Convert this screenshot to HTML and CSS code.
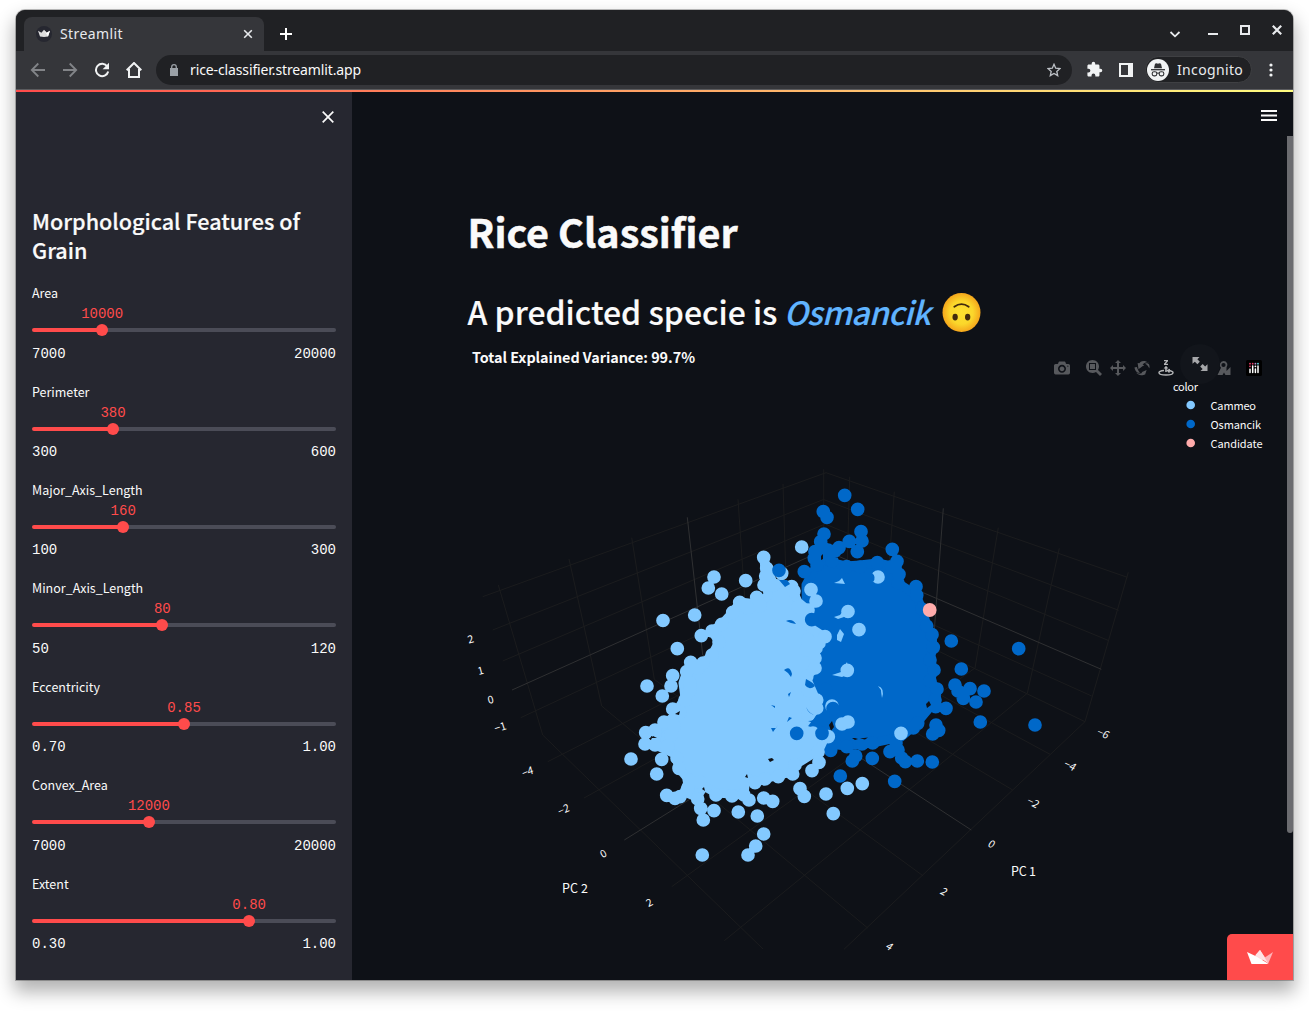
FILE: index.html
```html
<!DOCTYPE html>
<html lang="en">
<head>
<meta charset="utf-8">
<title>Streamlit</title>
<link rel="stylesheet" href="styles.css">
</head>
<body>
<div class="window">
  <div class="tabstrip">
    <div class="tab">
      <svg class="favicon" viewBox="0 0 16 16"><circle cx="8" cy="8" r="8" fill="#262730"/><path d="M2 4.8l3.4 2L8 3.8l2.6 3 3.4-2-2 5.8q-4 .8-8 0z" fill="#ddd"/><path d="M8 3.8l2.6 3 3.4-2-2 5.8z" fill="#fff"/></svg>
      <span class="tab-title">Streamlit</span>
      <svg class="tab-close" viewBox="0 0 10 10"><path d="M1.2 1.2l7.6 7.6M8.8 1.2L1.2 8.8" stroke="#e8eaed" stroke-width="1.6"/></svg>
    </div>
    <svg class="new-tab" viewBox="0 0 12 12"><path d="M6 0v12M0 6h12" stroke="#fff" stroke-width="2"/></svg>
    <div class="window-buttons">
      <svg width="12" height="12" viewBox="0 0 12 12"><path d="M1.5 4L6 8.3 10.500 4" fill="none" stroke="#e8eaed" stroke-width="1.8"/></svg>
      <svg width="10" height="12" viewBox="0 0 10 12"><path d="M0 10h10" stroke="#e8eaed" stroke-width="2"/></svg>
      <svg width="10" height="12" viewBox="0 0 10 12"><path d="M1 2h8v8H1z" fill="none" stroke="#e8eaed" stroke-width="2"/></svg>
      <svg width="10" height="12" viewBox="0 0 10 12"><path d="M.8 1.800l8.400 8.400M9.200 1.800L.8 10.200" stroke="#e8eaed" stroke-width="2.200"/></svg>
    </div>
  </div>
  <div class="toolbar">
    <svg class="nav" viewBox="0 0 16 16"><path d="M15 8H2M8.300 1.500L1.800 8l6.500 6.500" fill="none" stroke="#828488" stroke-width="1.800"/></svg>
    <svg class="nav" viewBox="0 0 16 16"><path d="M1 8h13M7.700 1.500L14.200 8l-6.500 6.500" fill="none" stroke="#828488" stroke-width="1.800"/></svg>
    <svg class="nav" viewBox="0 0 16 16"><path d="M13.300 4.500A6.200 6.200 0 1 0 14.200 9.500" fill="none" stroke="#f1f3f4" stroke-width="2"/><path d="M15 .8v6.400H8.600z" fill="#f1f3f4"/></svg>
    <svg class="nav" viewBox="0 0 16 16"><path d="M3 7v8h10V7M.7 8.300L8 1l7.300 7.300" fill="none" stroke="#f1f3f4" stroke-width="2"/></svg>
    <div class="address">
      <svg width="8" height="12" viewBox="0 0 8 12"><path d="M0 4h8v8H0z" fill="#9aa0a6"/><path d="M1.700 4.500V3a2.300 2.300 0 0 1 4.600 0v1.500" fill="none" stroke="#9aa0a6" stroke-width="1.300"/></svg>
      <span class="url">rice-classifier.streamlit.app</span>
      <svg class="star" viewBox="0 0 14 14"><path d="M7 1.300l1.700 3.900 4.300.4-3.200 2.800.9 4.200L7 10.400l-3.700 2.200.9-4.200L1 5.600l4.300-.4z" fill="none" stroke="#bdc1c6" stroke-width="1.300"/></svg>
    </div>
    <svg class="puzzle" viewBox="0 0 24 24"><path fill="#f1f3f4" d="M20.500 11H19V7c0-1.100-.9-2-2-2h-4V3.500a2.500 2.500 0 0 0-5 0V5H4c-1.100 0-2 .9-2 2v3.800h1.500a2.700 2.700 0 0 1 0 5.400H2V20c0 1.100.9 2 2 2h3.800v-1.500a2.700 2.700 0 0 1 5.400 0V22H17c1.100 0 2-.9 2-2v-4h1.500a2.500 2.500 0 0 0 0-5z"/></svg>
    <svg class="panel-icon" viewBox="0 0 14 14"><path d="M0 0h14v14H0zM2 2v10h7V2z" fill="#f1f3f4" fill-rule="evenodd"/></svg>
    <div class="incognito">
      <svg width="22" height="22" viewBox="0 0 22 22"><circle cx="11" cy="11" r="11" fill="#f1f3f4"/><path d="M7 9.300l1-4.500 1.600-.5q1.400.7 2.800 0l1.600.5 1 4.500z" fill="#303134"/><path d="M4 10.700h14" stroke="#303134" stroke-width="1.300"/><g fill="none" stroke="#303134" stroke-width="1.100"><rect x="5.200" y="12.700" width="4.600" height="4.200" rx="1.800"/><rect x="12.200" y="12.700" width="4.600" height="4.200" rx="1.800"/><path d="M9.800 14.300q1.200-.7 2.400 0"/></g></svg>
      <span>Incognito</span>
    </div>
    <svg class="dots" viewBox="0 0 4 14"><circle cx="2" cy="2" r="1.600"/><circle cx="2" cy="7" r="1.600"/><circle cx="2" cy="12" r="1.600"/></svg>
  </div>
  <div class="rainbow"></div>
  <div class="page">
    <aside class="sidebar">
      <svg class="sidebar-close" viewBox="0 0 12 12"><path d="M.7.7l10.600 10.600M11.300.7L.7 11.300" stroke="#fafafa" stroke-width="1.700"/></svg>
      <h2 class="sidebar-title">Morphological Features of Grain</h2>
      <div class="slider" style="--p:23.080%"><label>Area</label><div class="value"><span>10000</span></div><div class="track"><i></i></div><div class="range"><span>7000</span><span>20000</span></div></div>
      <div class="slider" style="--p:26.670%"><label>Perimeter</label><div class="value"><span>380</span></div><div class="track"><i></i></div><div class="range"><span>300</span><span>600</span></div></div>
      <div class="slider" style="--p:30%"><label>Major_Axis_Length</label><div class="value"><span>160</span></div><div class="track"><i></i></div><div class="range"><span>100</span><span>300</span></div></div>
      <div class="slider" style="--p:42.860%"><label>Minor_Axis_Length</label><div class="value"><span>80</span></div><div class="track"><i></i></div><div class="range"><span>50</span><span>120</span></div></div>
      <div class="slider" style="--p:50%"><label>Eccentricity</label><div class="value"><span>0.85</span></div><div class="track"><i></i></div><div class="range"><span>0.70</span><span>1.00</span></div></div>
      <div class="slider" style="--p:38.460%"><label>Convex_Area</label><div class="value"><span>12000</span></div><div class="track"><i></i></div><div class="range"><span>7000</span><span>20000</span></div></div>
      <div class="slider" style="--p:71.430%"><label>Extent</label><div class="value"><span>0.80</span></div><div class="track"><i></i></div><div class="range"><span>0.30</span><span>1.00</span></div></div>
    </aside>
    <main class="main">
      <svg class="menu" viewBox="0 0 16 12"><path d="M0 1h16M0 5.500h16M0 10h16" stroke="#fafafa" stroke-width="1.900"/></svg>
      <h1>Rice Classifier</h1>
      <h2 class="prediction"><span>A predicted specie is <em>Osmancik</em></span>
        <svg class="emoji" viewBox="0 0 38 38"><defs><radialGradient id="face"><stop offset="0" stop-color="#fde030"/><stop offset=".6" stop-color="#fbd72b"/><stop offset="1" stop-color="#f5a61c"/></radialGradient></defs><ellipse cx="19" cy="19" rx="18.500" ry="19" fill="url(#face)"/><path d="M12 13.300q7-5 14 0" fill="none" stroke="#422b0d" stroke-width="1.800" stroke-linecap="round"/><ellipse cx="12.800" cy="23.500" rx="2.600" ry="3.300" fill="#422b0d"/><ellipse cx="25" cy="23.500" rx="2.600" ry="3.300" fill="#422b0d"/></svg>
      </h2>
      <div class="figure">
        <svg class="plot" viewBox="468 340 800 625">
          <text class="plot-title" x="472" y="363" textLength="223">Total Explained Variance: 99.7%</text>
          <g class="grid">
            <path d="M482.700 596.700L826 472.700L1127.300 577.300M492.700 630L823.500 499.500L1118.700 610.300M502.700 661L825 524L1109 640.700M520.700 717.700L825 576L1091.700 696"/>
            <path d="M498.300 585L542.700 735M569 559L601.700 706M631.700 537.700L654.300 679.300M738 499.300L747 632M783 484L787 612M823.700 469.300V600M849.700 476.700L846 607M894.300 491.700L885 625M998.300 527.700L975 668M1059.300 548.300L1027.300 693.300M1128.300 572.300L1085 721.700"/>
            <path d="M542.700 735L763 949M601.700 706L867.700 928M654.300 679.300L923.300 876M747 632L1012.700 790M787 612L1050 754.300M824 596L1085 721.700M1085 721.700L844 949.300M1027.300 693.300L724.300 940.700M975 668L671.700 886.700M891 628L584 798M850 608L547.700 761.700"/>
            <path class="zero" d="M512 690L824 550L1101.300 669.300M687.300 517.300L702.700 655L971.300 830M943.300 508.300L933 648L624.300 840"/>
          </g>
          <g class="osmancik">
            <path class="mass" d="M820 542L817 565L806 585L808 742L847 746L872 743L901 737L917 723L936 700L937 689L930 681L934 670L930 660L933 647L932 635L927 626L922 609L916 595L898 583L897 561L892 566L877 563L860 565L846 566L828 562L828 550z"/>
            <path class="marks" d="M844.700 495.300h0M857.700 509.300h0M823.300 511.700h0M827 517.300h0M824 534h0M820.700 541.700h0M815 551.700h0M814.300 558.300h0M817 565h0M828 550h0M839 547.700h0M849.300 541.300h0M861 531.700h0M862 541h0M857.300 551.700h0M832 561h0M835 551h0M846.700 566.700h0M860 567h0M877.300 562.700h0M892.300 549.300h0M897 561.300h0M891.700 566.700h0M899 574.300h0M898 583h0M916 586.700h0M916.700 595.300h0M922 609h0M926.700 626h0M932 634.700h0M933.300 647.300h0M930 660h0M934 670h0M930 681h0M937 689h0M935 700h0M804.300 571.700h0M951.300 641h0M1018.700 648.700h0M961.300 669h0M955 685h0M958 691h0M970 688.700h0M963.300 698.300h0M984 691h0M976 702h0M946 708.300h0M935.700 706.700h0M980.300 722h0M1035 725h0M917.700 723.300h0M913.300 728h0M936 725h0M938.700 730.300h0M932.700 734h0M894.700 781.300h0M932.300 762h0M917.300 761h0M905.300 761.700h0M901.700 758h0M890 751.700h0M898 750h0M896 743h0M872.300 758.300h0M852.300 761h0M855.700 756h0M872.700 743h0M862 744h0M846.700 746.700h0M830.700 750.300h0M840.300 776h0"/>
            <path class="gap" d="M821 556l2-2v5l-2 1zM926 704l3-3 2 4-4 3zM852 738l3 0 3 1-3 1zM860 738.500l8-1-3 2zM829 725l3-4 2 6-3 4z"/>
          </g>
          <g class="cammeo">
            <path class="mass" d="M764 560L773 583L791 586L798 602L809 611L806 625L823 636L814 649L815 668L806 677L816 700L816 708L801 728L813 733L825 737L818 752L811 755L795 765L792 772L778 775L765 779L755 782L746 776L744 795L732 794L716 793L704 786L697 797L684 792L689 780L679 768L675 754L655 745L658 730L672 718L678 709L685 698L683 683L687 671L703 663L712 655L719 642L712 631L722 624L733 612L740 602L757 604L768 596z"/>
            <path class="marks" d="M763.700 557.300h0M766.700 568.300h0M765.700 576h0M764 585h0M773 585h0M781.700 573.300h0M756.700 597.300h0M739.700 602.300h0M732.700 612.300h0M721.700 624.300h0M712 631h0M701.300 635.700h0M719 642h0M712 655h0M703 663h0M690.700 662.300h0M686.700 671.700h0M672.700 675.700h0M671 686h0M662.300 696h0M685 700h0M672.700 709h0M664 722h0M655 730h0M645.700 732.700h0M645 744h0M655 745h0M661.700 759.300h0M656.700 774h0M679 768.300h0M677 758h0M689.300 780h0M688 788h0M666.700 795.300h0M675 798.300h0M680 796.700h0M697.700 799h0M700.700 808.300h0M703.300 820h0M714 810.700h0M716 795h0M732 796h0M738.300 812h0M744 795h0M749 800h0M757.300 816h0M763.700 798h0M772.700 801.300h0M755 782.700h0M765 779h0M778.300 776.700h0M792.700 774h0M795 765h0M812 770.700h0M819 762.300h0M818 752h0M828.300 736.700h0M800 788.700h0M804.300 796.300h0M826 794h0M825 636.700h0M819 643h0M816 648h0M815 668h0M806.700 676.700h0M816.700 700h0M816.700 708h0M832 706h0M801.700 728h0M813 733h0M791.700 586.700h0M794 591h0M811 589.700h0M816 601h0M808 610h0M798 607h0M801.700 547h0M714 577h0M708.300 588h0M721.700 594h0M745.700 580.700h0M694.700 615h0M663 620.500h0M677.300 648.700h0M647 686h0M631 759h0M702.300 855h0M763.700 834h0M755.700 846h0M748 855h0M878 577h0M848 611.500h0M859 629.700h0M847.300 670.300h0M842 724h0M848 722h0M901 733.300h0M862.300 783.700h0M847.300 788.300h0M833.300 813.700h0M815 658h0M808 690h0M808 640h0M806 650h0M690 690h0M680 712h0M671 735h0M668 746h0M674 726h0M700 782h0M808 715h0M748 608h0M760 606h0M698 668h0M690 683h0"/>
            <path d="M834 583l5-2 3-3 3 6zM834 617l6-2 3-4 1 6-6 2zM837 635l3-6 4 5-3 8-4-2zM832 675l9-3 6-10 2 12-7 3z"/>
            <path class="gap" d="M768 759l4-1 2 2-4 2zM651 738l2-2 4 2zM745 777l2-3 1 4zM675 714l5-3-1 4zM702 789l2-2 1 4z"/>
          </g>
          <g class="osmancik">
            <path class="marks" d="M779 570.300h0M811.700 619.700h0M796.700 733.300h0M822 733.300h0M825.500 689.500h0M833 708.500h0"/>
            <path d="M779 580l8 0 3 4-5 3zM786 621q6-3 10 3l-5-1zM784 670q6-5 8 4l-1 3-3-4zM771 705l4 1 0 2zM771 728l5 0 2-3-5 7zM806 679q8 4 9 7-6 5-10-1zM806 707q4 8 10 8-7 0-10-8zM788 694l3-2-2 5zM808 721q6 0 10-4l12-6-2 17-12-4zM792 718l-5 4 2-5zM871 572q6 5 2 10l-3-3z"/>
          </g>
          <path d="M878 686q7 2 4 12-1-6-1-8z" fill="#83c9ff"/>
          <circle class="candidate" cx="929.700" cy="610" r="6.900"/>
          <g class="ticks">
            <text transform="translate(470.500 638.500) rotate(-15)">2</text>
            <text transform="translate(480.500 670) rotate(-15)">1</text>
            <text transform="translate(490.500 699) rotate(-15)">0</text>
            <text transform="translate(500 726.500) rotate(-18)">−1</text>
            <text transform="translate(527.500 771) rotate(-22) skewX(-8)">−4</text>
            <text transform="translate(563.500 809) rotate(-25) skewX(-8)">−2</text>
            <text transform="translate(603 853) rotate(-28)">0</text>
            <text transform="translate(649 902) rotate(-28)">2</text>
            <text transform="translate(1103.500 733) rotate(23) skewX(-8)">−6</text>
            <text transform="translate(1070.500 765) rotate(25) skewX(-8)">−4</text>
            <text transform="translate(1033.500 802) rotate(27) skewX(-8)">−2</text>
            <text transform="translate(992 843.500) rotate(25) skewX(-8)">0</text>
            <text transform="translate(944.500 891) rotate(28) skewX(-8)">2</text>
            <text transform="translate(890 946) rotate(30) skewX(-8)">4</text>
          </g>
          <g class="axis-title"><text x="562" y="893" textLength="26">PC 2</text><text x="1011" y="876" textLength="25">PC 1</text></g>
          <g class="legend">
            <text x="1173" y="391" textLength="25">color</text>
            <circle cx="1190.700" cy="405" r="4.300" fill="#83c9ff"/><text x="1210.500" y="410" textLength="45.500">Cammeo</text>
            <circle cx="1190.700" cy="424" r="4.300" fill="#0068c9"/><text x="1210.500" y="429" textLength="50.500">Osmancik</text>
            <circle cx="1190.700" cy="443" r="4.300" fill="#ffabab"/><text x="1210.500" y="448" textLength="52">Candidate</text>
          </g>
        </svg>
        <div class="modebar">
          <svg class="tool camera" viewBox="0 0 1000 1000"><path transform="matrix(1 0 0 -1 0 850)" d="m500 450c-83 0-150-67-150-150 0-83 67-150 150-150 83 0 150 67 150 150 0 83-67 150-150 150z m400 150h-120c-16 0-34 13-39 29l-31 93c-6 15-23 28-40 28h-340c-16 0-34-13-39-28l-31-94c-6-15-23-28-40-28h-120c-55 0-100-45-100-100v-450c0-55 45-100 100-100h800c55 0 100 45 100 100v450c0 55-45 100-100 100z m-400-550c-138 0-250 112-250 250 0 138 112 250 250 250 138 0 250-112 250-250 0-138-112-250-250-250z m365 380c-19 0-35 16-35 35 0 19 16 35 35 35 19 0 35-16 35-35 0-19-16-35-35-35z"/></svg>
          <svg class="tool" viewBox="0 0 1000 1000"><path transform="matrix(1 0 0 -1 0 850)" d="m1000-25l-250 251c40 63 63 138 63 218 0 224-182 406-407 406-224 0-406-182-406-406s183-406 407-406c80 0 155 22 218 62l250-250 125 125z m-812 250l0 438 437 0 0-438-437 0z m62 375l313 0 0-312-313 0 0 312z"/></svg>
          <svg class="tool" viewBox="0 0 1000 1000"><path transform="matrix(1 0 0 -1 0 850)" d="m1000 350l-187 188 0-125-250 0 0 250 125 0-188 187-187-187 125 0 0-250-250 0 0 125-188-188 186-187 0 125 252 0 0-250-125 0 187-188 188 188-125 0 0 250 250 0 0-126 187 188z"/></svg>
          <svg class="tool" viewBox="0 0 1000 1000"><path transform="matrix(1 0 0 -1 0 850)" d="m922 660c-5 4-9 7-14 11-359 263-580-31-580-31l-102 28 58-400c0 1 1 1 2 2 118 108 351 249 351 249s-62 27-100 42c88 83 222 183 347 122 16-8 30-17 44-27-2 1-4 2-6 4z m36-329c0 0 64 229-88 296-62 27-124 14-175-11 157-78 225-208 249-266 8-19 11-31 11-31 2 5 6 15 11 32-5-13-8-20-8-20z m-775-239c70-31 117-50 198-32-121 80-199 346-199 346l-96-15-58-12c0 0 55-226 155-287z m603 133l-317-139c0 0 4-4 19-14 7-5 24-15 24-15s-177-147-389 4c235-287 536-112 536-112l31-22 100 299-4-1z m-298-153c6-4 14-9 24-15 0 0-17 10-24 15z"/></svg>
          <svg class="tool active" viewBox="0 0 16 16"><path d="M6 0h4v1.200L7.800 3.700H10V5H6V3.800L8.200 1.300H6zM8 5.800l2.400 2.700H8.800V12H7.200V8.500H5.600z"/><path d="M6 10.500C-1 11-1 15 8 15s9-4 2-4.500M12 9.500l-2.500 1 2 2" fill="none" stroke="#b5b6b8" stroke-width="1.400"/></svg>
          <svg class="tool home" viewBox="0 0 16 16"><path d="M7.500 1A4 4 0 0 1 10.500 7.600V11L14.500 7V15H9.500L8 12.500 6.500 15H1.500L5 7.800A4 4 0 0 1 7.500 1zm0 1.900a2.100 2.100 0 1 0 0 4.200 2.100 2.100 0 0 0 0-4.200z" fill-rule="evenodd"/></svg>
          <svg class="tool logo" viewBox="0 0 16 16"><rect width="16" height="16" rx="1.500" fill="#000"/><path d="M4 9.300v3.200M6.700 6V12.500M9.400 9v3.500M12 6V12.500" stroke="#fff" stroke-width="1.500" stroke-linecap="round"/><g fill="#ef3f6b"><circle cx="4" cy="3.700" r=".9"/><circle cx="4" cy="6.300" r=".9"/><circle cx="6.700" cy="3.700" r=".9"/></g><circle cx="9.400" cy="3.700" r=".9" fill="#b58ccb"/><circle cx="9.400" cy="6.300" r=".9" fill="#fff"/><circle cx="12" cy="3.700" r=".9" fill="#5fd9e0"/></svg>
        </div>
        <div class="fullscreen"><svg viewBox="0 0 16 16"><path d="M0 0h7.500L5.200 2.300 7.800 5 5.200 7.600 2.500 5 0 7.300zM16 15H8.500l2.300-2.300L8.200 10l2.600-2.600 2.700 2.700L16 7.700z"/></svg></div>
      </div>
      <div class="scrollbar"></div>
      <div class="badge"><svg viewBox="0 0 26 14"><path d="M13 0l5 7.500L13 12 8 6z" fill="#ffdede"/><path d="M26 2l-5 12-4-6z" fill="#ffb3b8"/><path d="M8.500 5L13 0l8 13z" fill="#ffe3e6"/><path d="M0 2l8.500 4L21 13.500 20 14H4.500z" fill="#fff"/></svg></div>
    </main>
  </div>
</div>
</body>
</html>
```
FILE: styles.css
```css
* { box-sizing: border-box; }
body {
  margin: 0;
  padding: 10px 16px 0;
  height: 1012px;
  overflow: hidden;
  background: #fff;
  color: #fafafa;
  font-family: "Noto Sans CJK SC", "Noto Sans", sans-serif;
}
svg { display: block; flex: none; }
.window {
  width: 1277px;
  height: 970px;
  border-radius: 9px 9px 0 0;
  background: #35363a;
  box-shadow: 0 0 0 1px rgba(0,0,0,.25), 0 10px 18px 2px rgba(0,0,0,.3);
}
.tabstrip {
  height: 41px;
  display: flex;
  align-items: flex-start;
  padding: 7px 11px 0 8px;
  background: #202124;
  border-radius: 9px 9px 0 0;
  font: 14.5px "Noto Sans", sans-serif;
}
.tab {
  width: 240px;
  height: 34px;
  display: flex;
  align-items: center;
  padding: 0 11px 0 12px;
  background: #35363a;
  border-radius: 8px 8px 0 0;
  color: #e8eaed;
}
.favicon { width: 16px; height: 16px; }
.tab-title { margin-left: 8px; flex: 1; padding-bottom: 2px; font-size: 14px; letter-spacing: .4px; }
.tab-close { width: 10px; height: 10px; }
.new-tab { width: 12px; height: 12px; margin: 11px 0 0 16px; }
.window-buttons { margin-left: auto; display: flex; gap: 22px; padding-top: 7px; }
.window-buttons svg:first-child { margin: 4px 5px 0 0; }
.toolbar {
  height: 39px;
  display: flex;
  align-items: center;
  padding: 0 20px 1px 14px;
  border-bottom: 1px solid #5b5c5f;
  font-family: "Noto Sans", sans-serif;
}
.nav { width: 16px; height: 16px; margin-right: 16px; }
.address {
  width: 916px;
  height: 30px;
  margin-left: -2px;
  display: flex;
  align-items: center;
  padding: 0 11px 0 14px;
  border-radius: 15px;
  background: #202124;
}
.url { flex: 1; margin-left: 12px; font-size: 14px; letter-spacing: -.12px; }
.star { width: 14px; height: 14px; }
.puzzle { width: 17px; height: 17px; margin-left: 14px; }
.panel-icon { width: 14px; height: 14px; margin-left: 16px; }
.incognito {
  width: 107px;
  height: 27px;
  margin-left: 12px;
  display: flex;
  align-items: center;
  gap: 8px;
  padding-left: 1px;
  border: 1px solid #3f4043;
  border-radius: 14px;
  background: #202124;
  color: #e8eaed;
  font-size: 14px;
  letter-spacing: .35px;
}
.dots { width: 4px; height: 14px; margin-left: auto; fill: #f1f3f4; }
.rainbow { height: 2px; background: linear-gradient(90deg, #ff4b4b, #fffd80); }
.page { height: 888px; display: flex; }
.sidebar {
  width: 336px;
  padding: 19px 16px 0;
  background: #262730;
  overflow: hidden;
}
.sidebar-close { width: 12px; height: 12px; margin-left: 290px; }
.sidebar-title {
  margin: 83px 0 20.300px;
  font-size: 21.600px;
  font-weight: 500;
  line-height: 29px;
  -webkit-text-stroke: .2px #fafafa;
}
.slider { height: 98.400px; }
.slider label { display: block; height: 20px; line-height: 18px; font-size: 12.500px; }
.value {
  height: 20px;
  line-height: 20px;
  padding-left: var(--p);
  color: #ff4b4b;
  font-family: "Liberation Mono", monospace;
  font-size: 14px;
}
.value span { display: inline-block; transform: translateX(-50%); }
.track {
  height: 4px;
  margin: 4px 0 11.400px;
  border-radius: 2px;
  background: linear-gradient(90deg, #ff4b4b var(--p), #4b4c57 var(--p));
}
.track i {
  display: block;
  width: 12px;
  height: 12px;
  border-radius: 50%;
  background: #ff4b4b;
  transform: translateY(-4px);
  margin-left: calc(var(--p) - 6px);
}
.range {
  display: flex;
  justify-content: space-between;
  line-height: 20px;
  font-family: "Liberation Mono", monospace;
  font-size: 14px;
}
.main { position: relative; flex: 1; padding-left: 116px; background: #0e1117; }
.menu { width: 16px; height: 12px; margin: 18px 0 0 793px; }
h1 {
  margin: 82px 0 0 -.5px;
  font-size: 39.500px;
  line-height: 53px;
  font-weight: 700;
  -webkit-text-stroke: .5px #fafafa;
}
.prediction {
  display: flex;
  align-items: center;
  gap: 12px;
  margin: 34px 0 6px -.5px;
  height: 43px;
  line-height: 42px;
  font-size: 31.950px;
  font-weight: 500;
  -webkit-text-stroke: .15px;
}
.prediction span { padding-bottom: 3px; }
.prediction em { color: #60b4ff; letter-spacing: -.7px; margin-left: -1px; }
.emoji { width: 39px; height: 39px; }
.figure { position: relative; width: 800px; height: 625px; }
.plot { width: 800px; height: 625px; overflow: visible; fill: #fafafa; }
.plot-title { font-size: 14.400px; font-weight: 700; }
.grid path { fill: none; stroke: #1b1c1e; stroke-width: 1; }
.grid .zero { stroke: #2f3032; }
.marks { fill: none; stroke: currentColor; stroke-width: 13.700; stroke-linecap: round; }
.osmancik { color: #0068c9; fill: currentColor; }
.cammeo { color: #83c9ff; fill: currentColor; }
.mass { stroke: currentColor; stroke-width: 9; stroke-linejoin: round; }
.gap { fill: #0e1117; }
.candidate { fill: #ffabab; }
.ticks { font-size: 10.500px; text-anchor: middle; dominant-baseline: central; }
.axis-title { font-size: 12.500px; }
.legend { font-size: 11px; }
.modebar {
  position: absolute;
  top: 20px;
  left: 586px;
  display: flex;
  gap: 8px;
}
.tool { width: 16px; height: 16px; fill: #57595d; }
.camera { margin-right: 8px; }
.active { fill: #b5b6b8; }
.home { margin-left: 34px; }
.logo { margin-left: 6px; }
.fullscreen {
  position: absolute;
  top: 4px;
  left: 712px;
  width: 40px;
  height: 40px;
  padding: 13px 11px 0 12px;
  border-radius: 50%;
  background: #12151b;
}
.fullscreen svg { width: 16px; height: 15px; fill: #a6a7aa; }
.scrollbar {
  position: absolute;
  top: 44px;
  right: 0;
  width: 6px;
  height: 697px;
  border-radius: 0 0 3px 3px;
  background: #6b6c70;
}
.badge {
  position: absolute;
  right: 0;
  bottom: 0;
  width: 66px;
  height: 46px;
  padding: 16px 20px;
  border-radius: 5px 0 0 0;
  background: #ff4b4b;
}
.badge svg { width: 26px; height: 14px; }
```
